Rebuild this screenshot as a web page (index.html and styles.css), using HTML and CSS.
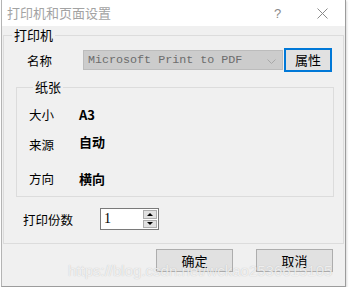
FILE: index.html
```html
<!DOCTYPE html>
<html lang="zh-CN">
<head>
    <meta charset="UTF-8">
    <title>打印机和页面设置</title>
    <link rel="stylesheet" href="styles.css">
</head>
<body>
    <div class="window">
        <div class="titlebar">
            <span class="title">打印机和页面设置</span>
            <span class="help">?</span>
            <span class="close">
                <svg width="11" height="11" viewBox="0 0 11 11">
                    <path d="M0.5 0.5 L10.5 10.5 M10.5 0.5 L0.5 10.5" stroke="#8a8a8a" stroke-width="1" fill="none"/>
                </svg>
            </span>
        </div>

        <div class="client">
            <fieldset class="group printer-group">
                <legend>打印机</legend>

                <div class="name-row">
                    <span class="name-label">名称</span>
                    <div class="combo">
                        <span class="combo-text">Microsoft Print to PDF</span>
                        <svg class="chevron" width="9" height="5" viewBox="0 0 9 5">
                            <path d="M0.5 0.5 L4.5 4.5 L8.5 0.5" stroke="#a8a8a8" stroke-width="1" fill="none"/>
                        </svg>
                    </div>
                    <button class="btn btn-focus">属性</button>
                </div>

                <fieldset class="group paper-group">
                    <legend>纸张</legend>
                    <div class="paper-row">
                        <span class="paper-label">大小</span>
                        <span class="paper-value">A3</span>
                    </div>
                    <div class="paper-row">
                        <span class="paper-label">来源</span>
                        <span class="paper-value raised">自动</span>
                    </div>
                    <div class="paper-row last">
                        <span class="paper-label">方向</span>
                        <span class="paper-value">横向</span>
                    </div>
                </fieldset>

                <div class="copies-row">
                    <span class="copies-label">打印份数</span>
                    <div class="spinner">
                        <span class="spinner-value">1</span>
                        <div class="spin-buttons">
                            <span class="spin up"></span>
                            <span class="spin down"></span>
                        </div>
                    </div>
                </div>
            </fieldset>

            <div class="button-row">
                <button class="btn btn-ok">确定</button>
                <button class="btn btn-cancel">取消</button>
            </div>
        </div>

        <div class="watermark">https://blog.csdn.net/wckao2536615105</div>
    </div>
</body>
</html>
```

FILE: styles.css
```css
* {
    margin: 0;
    padding: 0;
    box-sizing: border-box;
}

body {
    background: #ffffff;
    font-family: "Noto Sans CJK SC", "Liberation Sans", sans-serif;
    font-size: 12.5px;
    color: #000000;
}

.window {
    position: relative;
    margin-left: 1px;
    width: 345px;
    height: 287px;
    border-left: 1px solid #b4b4b4;
    border-right: 1px solid #9c9c9c;
    border-bottom: 1px solid #9c9c9c;
    box-shadow: 1px 1px 2px rgba(0, 0, 0, 0.15);
    background: #f0f0f0;
    overflow: hidden;
}

.titlebar {
    height: 26px;
    background: #ffffff;
    display: flex;
    align-items: center;
    padding-left: 5px;
}

.title {
    font-size: 13px;
    color: #a3a3a3;
    line-height: 14px;
    flex: 1;
}

.help {
    font-family: "Liberation Sans", sans-serif;
    font-size: 13px;
    color: #8a8a8a;
    width: 43px;
}

.close {
    width: 28px;
    display: flex;
    align-items: center;
}

.client {
    padding: 0 0 0 1px;
}

.group {
    border: 1px solid #dcdcdc;
}

.group legend {
    font-size: 13px;
    line-height: 14px;
    height: 14px;
    padding: 0 2px;
}

.printer-group {
    margin-top: 2px;
    width: 341px;
    height: 216px;
}

.printer-group > legend {
    margin-left: 8px;
}

.name-row {
    display: flex;
    align-items: center;
    height: 24px;
    margin-top: 6px;
    padding-left: 23px;
}

.name-label {
    width: 56px;
}

.combo {
    width: 200px;
    height: 20px;
    background: #cccccc;
    border: 1px solid #bcbcbc;
    display: flex;
    align-items: center;
    padding-left: 4px;
    padding-right: 6px;
}

.combo-text {
    font-family: "Liberation Mono", monospace;
    font-size: 11.7px;
    color: #6d6d6d;
    flex: 1;
}

.chevron {
    margin-top: 2px;
}

.btn {
    font-family: "Noto Sans CJK SC", sans-serif;
    font-size: 13px;
    line-height: 14px;
    background: #e1e1e1;
    border: 1px solid #adadad;
    color: #000000;
    height: 23px;
}

.btn-focus {
    width: 48px;
    height: 24px;
    margin-left: 1px;
    border: 2px solid #0078d7;
}

.paper-group {
    margin-top: 8px;
    margin-left: 12px;
    width: 318px;
    height: 117px;
    padding-left: 12px;
}

.paper-group > legend {
    margin-left: 4px;
}

.paper-row {
    display: flex;
    align-items: center;
    height: 20px;
    margin-top: 10px;
}

.paper-row.last {
    margin-top: 14px;
}

.paper-label {
    width: 50px;
}

.paper-value {
    font-weight: bold;
    font-size: 13px;
}

.paper-value.raised {
    margin-top: -5px;
}

.copies-row {
    display: flex;
    align-items: center;
    height: 22px;
    margin-top: 11px;
    padding-left: 19px;
}

.copies-label {
    width: 77px;
}

.spinner {
    width: 59px;
    height: 22px;
    background: #ffffff;
    border: 1px solid #7a7a7a;
    display: flex;
    align-items: center;
    padding: 1px;
}

.spinner-value {
    font-family: "Liberation Serif", serif;
    font-size: 14px;
    flex: 1;
    padding-left: 2px;
}

.spin-buttons {
    width: 14px;
    height: 18px;
    display: flex;
    flex-direction: column;
    gap: 1px;
}

.spin {
    flex: 1;
    background: #e1e1e1;
    border: 1px solid #adadad;
    display: flex;
    align-items: center;
    justify-content: center;
}

.spin::after {
    content: '';
    width: 0;
    height: 0;
    border-left: 3px solid transparent;
    border-right: 3px solid transparent;
}

.spin.up::after {
    border-bottom: 3px solid #000000;
}

.spin.down::after {
    border-top: 3px solid #000000;
}

.button-row {
    display: flex;
    justify-content: flex-end;
    gap: 23px;
    margin-top: 5px;
    padding-right: 12px;
}

.btn-ok,
.btn-cancel {
    width: 77px;
}

.watermark {
    position: absolute;
    left: 66px;
    top: 262px;
    font-family: "Liberation Sans", sans-serif;
    font-size: 15px;
    color: rgba(255, 255, 255, 0.75);
    text-shadow: 0 0 1px rgba(120, 120, 120, 0.45);
    white-space: nowrap;
}
```
